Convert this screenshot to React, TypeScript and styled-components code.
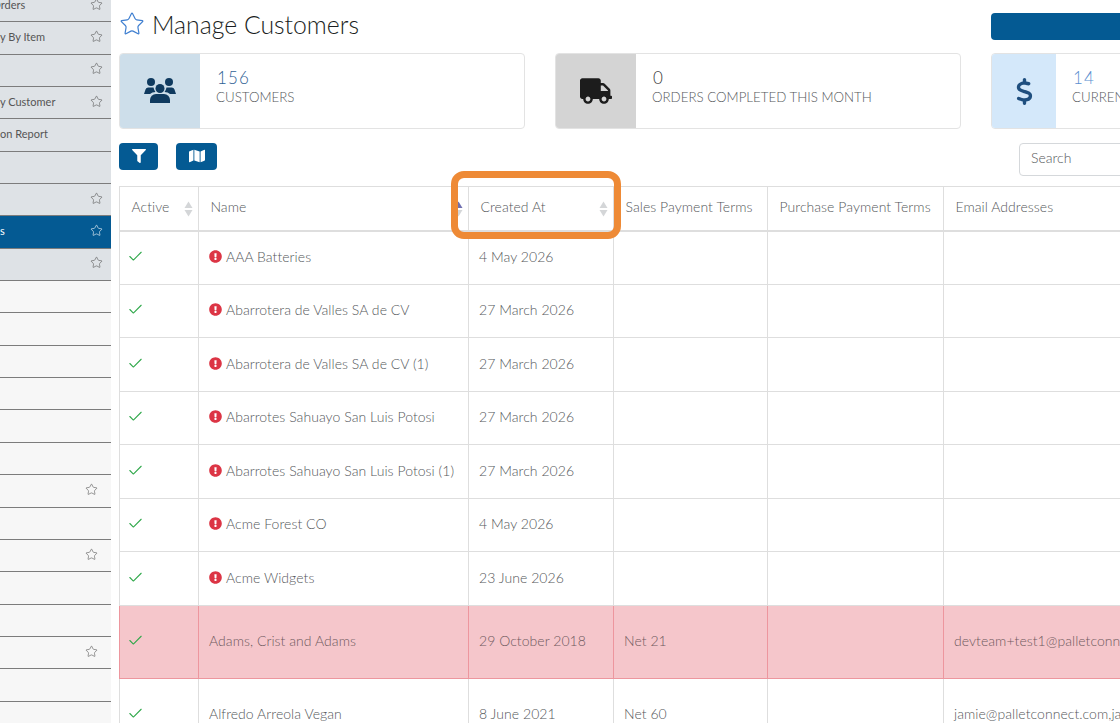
import React from 'react';
import styled, { createGlobalStyle } from 'styled-components';
import { Check, Star } from 'lucide-react';
import { FaExclamationCircle, FaFilter, FaMap, FaTruck } from 'react-icons/fa';
import { FaDollarSign } from 'react-icons/fa6';

const GlobalStyle = createGlobalStyle`
  html, body {
    margin: 0;
    padding: 0;
    height: 100%;
    overflow: hidden;
    background: #fff;
    font-family: Lato, "Open Sans", sans-serif;
    color: #6c6f73;
  }
  * { box-sizing: border-box; }
`;

const Page = styled.div`
  display: flex;
  width: 1120px;
  height: 723px;
  overflow: hidden;
  position: relative;
`;

const Sidebar = styled.nav`
  flex: 0 0 111px;
  background: #f7f7f7;
  margin-top: -10px;
  overflow: hidden;
`;

const NavRow = styled.div<{ $tone: 'grey' | 'active' | 'plain'; $inset: number }>`
  display: flex;
  align-items: center;
  justify-content: space-between;
  height: 32.35px;
  padding: 0 ${(p) => p.$inset}px 3px 0;
  border-bottom: 1px solid #7c7c7c;
  font-size: 11px;
  white-space: nowrap;
  color: ${(p) => (p.$tone === 'active' ? '#fff' : '#555')};
  background: ${(p) => (p.$tone === 'active' ? '#045a93' : p.$tone === 'grey' ? '#dee2e6' : '#f7f7f7')};
`;

const NavLabel = styled.span<{ $clip?: boolean }>`
  margin-left: ${(p) => (p.$clip ? -8 : 0)}px;
`;

const Main = styled.main`
  flex: 0 0 1400px;
  padding-left: 8px;
`;

const TitleRow = styled.header`
  display: flex;
  align-items: center;
  justify-content: space-between;
  height: 53px;
  padding-bottom: 5px;
`;

const TitleWrap = styled.div`
  display: flex;
  align-items: center;
  gap: 7px;
`;

const Title = styled.h1`
  margin: 0;
  font-size: 24.8px;
  font-weight: 300;
  color: #1a1e22;
`;

const PrimaryBlank = styled.div`
  width: 520px;
  height: 27px;
  margin-top: 5px;
  background: #045a93;
  border-radius: 4px 0 0 4px;
`;

const Cards = styled.section`
  display: flex;
  gap: 30px;
`;

const Card = styled.div`
  display: flex;
  width: 406px;
  height: 76px;
  border: 1px solid #e3e3e3;
  border-radius: 4px;
  overflow: hidden;
`;

const CardIcon = styled.div<{ $bg: string; $fg: string; $width: number; $size: number }>`
  display: flex;
  align-items: center;
  justify-content: center;
  flex: 0 0 ${(p) => p.$width}px;
  background: ${(p) => p.$bg};
  color: ${(p) => p.$fg};
  font-size: ${(p) => p.$size}px;
`;

const CardBody = styled.div`
  display: flex;
  flex-direction: column;
  padding: 14px 0 0 16px;
`;

const CardValue = styled.span<{ $color: string }>`
  font-size: 17px;
  font-weight: 300;
  line-height: 20px;
  letter-spacing: 1.2px;
  padding-left: 1px;
  color: ${(p) => p.$color};
`;

const CardLabel = styled.span`
  font-size: 13.3px;
  font-weight: 300;
  line-height: 18px;
  color: #55585b;
  white-space: nowrap;
`;

const Toolbar = styled.div`
  display: flex;
  align-items: flex-start;
  height: 57px;
  padding-top: 14px;
`;

const IconButton = styled.button<{ $width: number; $size: number }>`
  display: flex;
  align-items: center;
  justify-content: center;
  width: ${(p) => p.$width}px;
  height: 27px;
  margin-right: 18px;
  padding: 0 0 2px;
  border: 0;
  border-radius: 4px;
  background: #045a93;
  color: #fff;
  font-size: ${(p) => p.$size}px;
`;

const SearchInput = styled.input`
  width: 180px;
  height: 33px;
  margin-left: 784px;
  padding: 0 11px 4px;
  border: 1px solid #d5d8db;
  border-radius: 4px;
  font: inherit;
  font-size: 14px;
  font-weight: 300;
  &::placeholder {
    color: #55585b;
    opacity: 1;
  }
`;

const Table = styled.table`
  width: 1230px;
  table-layout: fixed;
  border-collapse: collapse;
  font-size: 14px;
  font-weight: 300;
  letter-spacing: 0.05px;
`;

const HeadCell = styled.th`
  position: relative;
  height: 44px;
  padding: 0 11.5px 3px;
  border: 1px solid #dedede;
  border-bottom-width: 2px;
  font-weight: 300;
  text-align: left;
  white-space: nowrap;
  color: #55585b;
`;

const SortMark = styled.svg`
  position: absolute;
  right: 5px;
  top: 14px;
`;

const BodyRow = styled.tr<{ $danger?: boolean; $height: number }>`
  height: ${(p) => p.$height}px;
  background: ${(p) => (p.$danger ? '#f5c6cb' : '#fff')};
  color: ${(p) => (p.$danger ? '#6f5a5e' : '#55585b')};
  & > td {
    border-color: ${(p) => (p.$danger ? '#ed969e' : '#dedede')};
  }
`;

const Cell = styled.td`
  padding: 0 10px 2px;
  border: 1px solid #dedede;
  white-space: nowrap;
  overflow: hidden;
`;

const CheckMark = styled(Check)`
  display: block;
  color: #2fa84a;
  margin-left: -3px;
`;

const NameWrap = styled.div`
  display: flex;
  align-items: center;
  gap: 4px;
`;

const Alert = styled(FaExclamationCircle)`
  flex: none;
  color: #dc3545;
  font-size: 13px;
`;

const Highlight = styled.div`
  position: absolute;
  left: 451px;
  top: 171px;
  width: 170px;
  height: 68px;
  border: 7px solid #ee8a36;
  border-radius: 13px;
`;

type NavItem = { label?: string; star?: boolean; clip?: boolean; inset?: number };

const navItems: NavItem[] = [
  { label: 'Orders', star: true, clip: true },
  { label: 'y By Item', star: true },
  { star: true },
  { label: 'y Customer', star: true },
  { label: 'on Report' },
  {},
  { star: true },
  { label: 's', star: true },
  { star: true },
  {},
  {},
  {},
  {},
  {},
  {},
  { star: true, inset: 13 },
  {},
  { star: true, inset: 13 },
  {},
  {},
  { star: true, inset: 13 },
  {},
  {},
];

type Customer = {
  name: string;
  created: string;
  alert?: boolean;
  danger?: boolean;
  sales?: string;
  email?: string;
  height: number;
};

const customers: Customer[] = [
  { name: 'AAA Batteries', created: '4 May 2026', alert: true, height: 53.5 },
  { name: 'Abarrotera de Valles SA de CV', created: '27 March 2026', alert: true, height: 53.5 },
  { name: 'Abarrotera de Valles SA de CV (1)', created: '27 March 2026', alert: true, height: 53.5 },
  { name: 'Abarrotes Sahuayo San Luis Potosi', created: '27 March 2026', alert: true, height: 53.5 },
  { name: 'Abarrotes Sahuayo San Luis Potosi (1)', created: '27 March 2026', alert: true, height: 53.5 },
  { name: 'Acme Forest CO', created: '4 May 2026', alert: true, height: 53.5 },
  { name: 'Acme Widgets', created: '23 June 2026', alert: true, height: 53.5 },
  {
    name: 'Adams, Crist and Adams',
    created: '29 October 2018',
    danger: true,
    sales: 'Net 21',
    email: 'devteam+test1@palletconnect.com,devteam+test2@palletconnect.com',
    height: 73,
  },
  {
    name: 'Alfredo Arreola Vegan',
    created: '8 June 2021',
    sales: 'Net 60',
    email: 'jamie@palletconnect.com,jamie+1@palletconnect.com',
    height: 72,
  },
];

function SortIcon({ up }: { up?: boolean }) {
  return (
    <SortMark width="9" height="16" viewBox="0 0 9 16">
      <path d="M4.5 0.5 L8.5 7 H0.5 Z" fill={up ? '#6f6fb0' : '#d4d6d8'} />
      <path d="M4.5 15.5 L8.5 9 H0.5 Z" fill="#d4d6d8" />
    </SortMark>
  );
}

function UsersIcon() {
  return (
    <svg width="32" height="28" viewBox="0 0 32 28" fill="currentColor">
      <circle cx="7" cy="5" r="4" />
      <circle cx="25" cy="5" r="4" />
      <circle cx="16" cy="11.5" r="4.5" />
      <path d="M6 26 v-3 a6 6 0 0 1 6-6 h8 a6 6 0 0 1 6 6 v3 z" />
      <path d="M0 17 L1.5 12.5 A3 3 0 0 1 4.5 10.5 H9.5 Q10 13 11.5 15 Q8 15 6 17 Z" />
      <path d="M32 17 L30.5 12.5 A3 3 0 0 0 27.5 10.5 H22.5 Q22 13 20.5 15 Q24 15 26 17 Z" />
    </svg>
  );
}

function App() {
  return (
    <Page>
      <GlobalStyle />
      <Sidebar>
        {navItems.map((item, i) => (
          <NavRow key={i} $tone={i === 7 ? 'active' : i < 9 ? 'grey' : 'plain'} $inset={item.inset ?? 8}>
            <NavLabel $clip={item.clip}>{item.label}</NavLabel>
            {item.star && <Star size={13} strokeWidth={1.1} />}
          </NavRow>
        ))}
      </Sidebar>
      <Main>
        <TitleRow>
          <TitleWrap>
            <Star size={26} strokeWidth={1.1} color="#3f7fd0" />
            <Title>Manage Customers</Title>
          </TitleWrap>
          <PrimaryBlank />
        </TitleRow>
        <Cards>
          <Card>
            <CardIcon $bg="#cddeea" $fg="#0f3a5f" $width={80} $size={32}>
              <UsersIcon />
            </CardIcon>
            <CardBody>
              <CardValue $color="#2f6296">156</CardValue>
              <CardLabel>CUSTOMERS</CardLabel>
            </CardBody>
          </Card>
          <Card>
            <CardIcon $bg="#d4d4d4" $fg="#1c1c1c" $width={80} $size={32}>
              <FaTruck />
            </CardIcon>
            <CardBody>
              <CardValue $color="#3a3a3a">0</CardValue>
              <CardLabel>ORDERS COMPLETED THIS MONTH</CardLabel>
            </CardBody>
          </Card>
          <Card>
            <CardIcon $bg="#d4e8fa" $fg="#1f4f7f" $width={64} $size={27}>
              <FaDollarSign />
            </CardIcon>
            <CardBody>
              <CardValue $color="#5b8fd0">14</CardValue>
              <CardLabel>CURRENCIES</CardLabel>
            </CardBody>
          </Card>
        </Cards>
        <Toolbar>
          <IconButton $width={39} $size={14}>
            <FaFilter />
          </IconButton>
          <IconButton $width={41} $size={16}>
            <FaMap />
          </IconButton>
          <SearchInput placeholder="Search" />
        </Toolbar>
        <Table>
          <colgroup>
            <col width="79" />
            <col width="270" />
            <col width="145" />
            <col width="154" />
            <col width="176" />
            <col width="406" />
          </colgroup>
          <thead>
            <tr>
              <HeadCell>
                Active
                <SortIcon />
              </HeadCell>
              <HeadCell>
                Name
                <SortIcon up />
              </HeadCell>
              <HeadCell>
                Created At
                <SortIcon />
              </HeadCell>
              <HeadCell>Sales Payment Terms</HeadCell>
              <HeadCell>Purchase Payment Terms</HeadCell>
              <HeadCell>Email Addresses</HeadCell>
            </tr>
          </thead>
          <tbody>
            {customers.map((c) => (
              <BodyRow key={c.name} $danger={c.danger} $height={c.height}>
                <Cell>
                  <CheckMark size={17} strokeWidth={1.5} />
                </Cell>
                <Cell>
                  <NameWrap>
                    {c.alert && <Alert />}
                    {c.name}
                  </NameWrap>
                </Cell>
                <Cell>{c.created}</Cell>
                <Cell>{c.sales}</Cell>
                <Cell />
                <Cell>{c.email}</Cell>
              </BodyRow>
            ))}
          </tbody>
        </Table>
      </Main>
      <Highlight />
    </Page>
  );
}

export default App;
